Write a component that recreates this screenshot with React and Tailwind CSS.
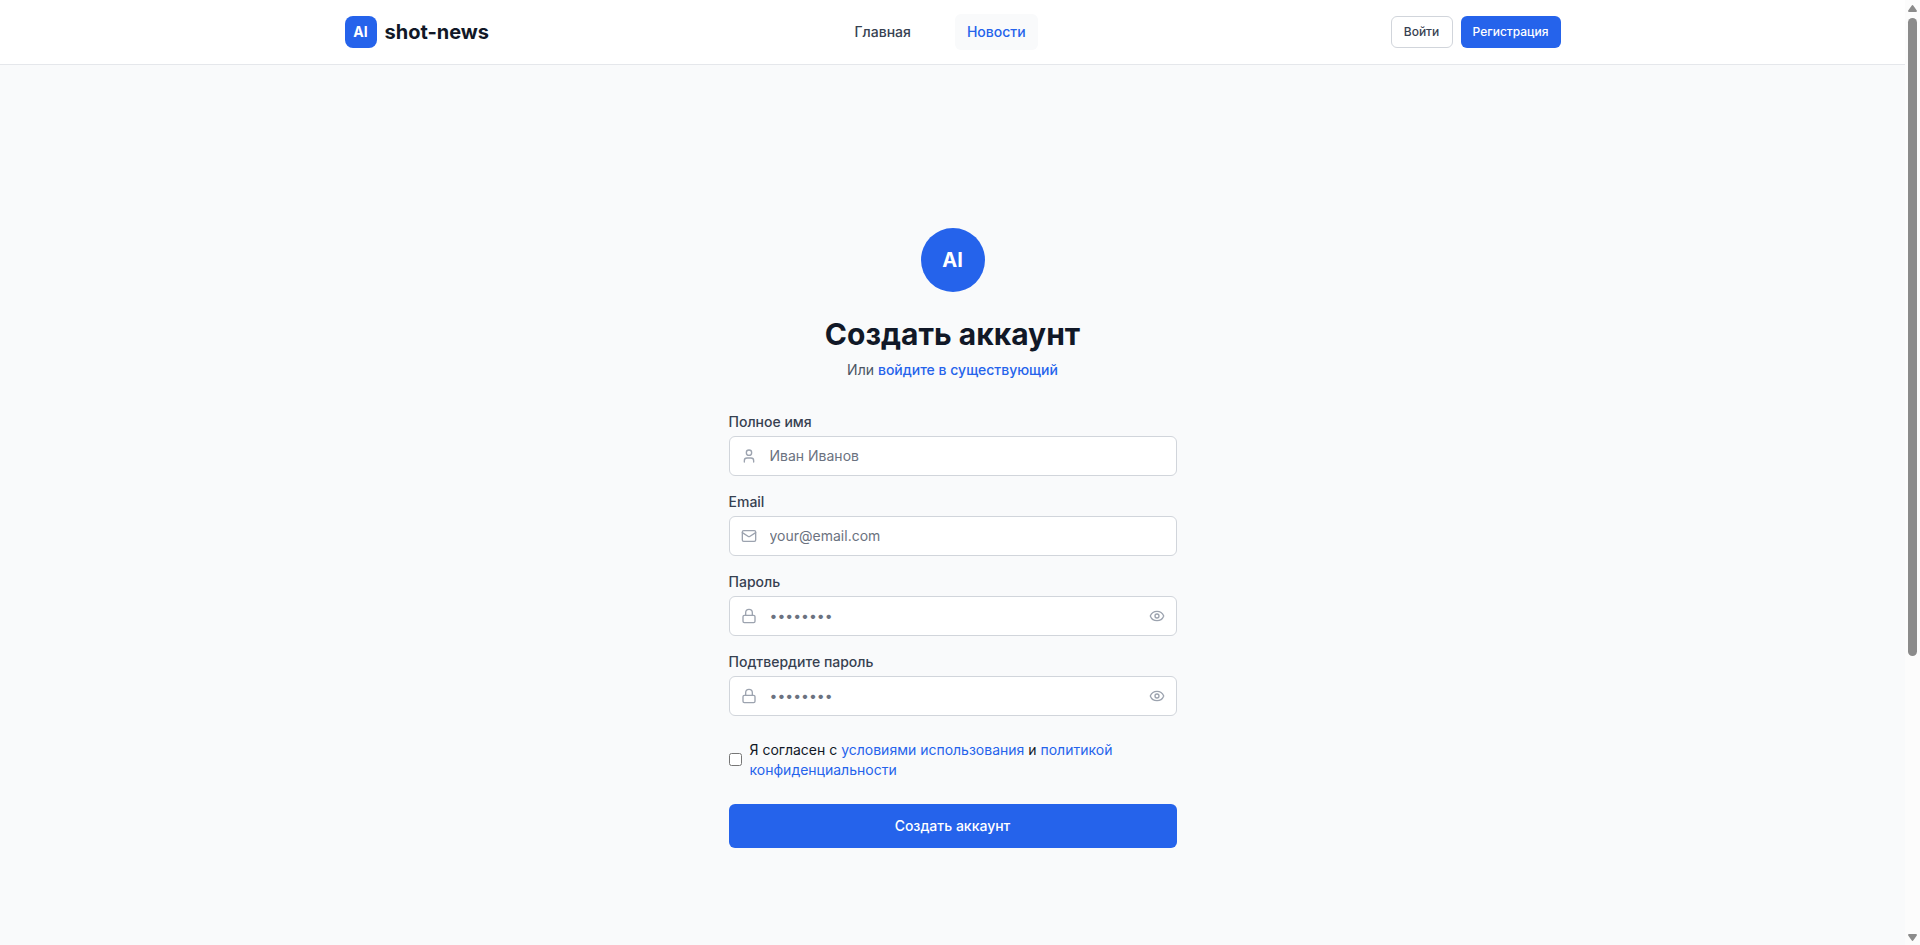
import { User, Mail, Lock, Eye } from "lucide-react";

const fields = [
  { id: "name", label: "Полное имя", placeholder: "Иван Иванов", type: "text", Icon: User },
  { id: "email", label: "Email", placeholder: "your@email.com", type: "email", Icon: Mail },
  { id: "password", label: "Пароль", placeholder: "••••••••", type: "password", Icon: Lock },
  { id: "confirm", label: "Подтвердите пароль", placeholder: "••••••••", type: "password", Icon: Lock },
];

function Header() {
  return (
    <header className="border-b border-[#e5e7eb] bg-white">
      <div className="mx-auto flex h-16 max-w-7xl items-center justify-between pr-[31.5px] pl-8">
        <a className="flex items-center gap-2">
          <span className="flex h-8 w-8 items-center justify-center rounded-lg bg-[#2563eb] text-sm font-bold text-white">AI</span>
          <span className="text-xl font-bold text-[#111827]">shot-news</span>
        </a>
        <nav className="flex items-center gap-8 text-sm font-medium">
          <a className="rounded-md px-3 py-2 text-[#374151]">Главная</a>
          <a className="rounded-md bg-[#f9fafb] px-3 py-2 text-[#2563eb]">Новости</a>
        </nav>
        <div className="flex items-center gap-2 text-xs font-medium">
          <button className="h-8 w-[62px] rounded-md border border-[#d1d5db] bg-white pr-px text-[#374151]">Войти</button>
          <button className="h-8 w-[100px] rounded-md bg-[#2563eb] pr-px text-white">Регистрация</button>
        </div>
      </div>
    </header>
  );
}

function Field({ id, label, placeholder, type, Icon }) {
  return (
    <div>
      <label htmlFor={id} className="block text-sm font-medium text-[#374151]">{label}</label>
      <div className="relative mt-1">
        <Icon className="absolute top-3 left-3 h-4 w-4 text-[#9ca3af]" />
        <input
          id={id}
          type={type}
          placeholder={placeholder}
          className="block h-10 w-full rounded-md border border-[#d1d5db] bg-white px-10 pb-0.5 text-sm placeholder:text-[#6b7280]"
        />
        {type === "password" && <Eye className="absolute top-3 right-3 h-4 w-4 text-[#9ca3af]" />}
      </div>
    </div>
  );
}

function Scrollbar() {
  return (
    <div className="flex w-[15px] shrink-0 flex-col items-center bg-[#fcfcfc]">
      <svg className="mt-[5px] h-[7px] w-[9px]" viewBox="0 0 9 7" fill="#8b8b8b">
        <path d="M4.5 0Q5 0 5.4.7L8.8 5.6Q9.2 7 8 7H1Q-.2 7 .2 5.6L3.6.7Q4 0 4.5 0Z" />
      </svg>
      <div className="mt-1.5 h-[638px] w-[9px] shrink-0 rounded-full bg-[#8b8b8b]" />
      <svg className="mt-auto mb-1 h-[7px] w-[9px]" viewBox="0 0 9 7" fill="#8b8b8b">
        <path d="M4.5 7Q5 7 5.4 6.3L8.8 1.4Q9.2 0 8 0H1Q-.2 0 .2 1.4L3.6 6.3Q4 7 4.5 7Z" />
      </svg>
    </div>
  );
}

export default function App() {
  return (
    <div className="flex h-[945px] w-full overflow-hidden bg-[#f9fafb] font-['Inter',sans-serif] text-[#111827]">
      <div className="min-w-0 flex-1">
        <Header />
        <main className="mx-auto w-full max-w-md pt-[163px]">
          <div className="flex flex-col items-center">
            <div className="flex h-16 w-16 items-center justify-center rounded-full bg-[#2563eb] text-xl font-bold text-white">AI</div>
            <h1 className="mt-6 text-3xl font-bold">Создать аккаунт</h1>
            <p className="mt-2 text-sm text-[#4b5563]">
              Или <a className="font-medium text-[#2563eb]">войдите в существующий</a>
            </p>
          </div>
          <form className="mt-8">
            <div className="flex flex-col gap-4">
              {fields.map((field) => (
                <Field key={field.id} {...field} />
              ))}
            </div>
            <div className="mt-6 flex items-center gap-2">
              <input id="terms" type="checkbox" className="mb-px h-[13px] w-[13px] shrink-0" />
              <label htmlFor="terms" className="text-sm">
                Я согласен с <a className="text-[#2563eb]">условиями использования</a> и{" "}
                <a className="text-[#2563eb]">политикой конфиденциальности</a>
              </label>
            </div>
            <button type="button" className="mt-6 h-11 w-full rounded-md bg-[#2563eb] text-sm font-medium text-white">
              Создать аккаунт
            </button>
          </form>
        </main>
      </div>
      <Scrollbar />
    </div>
  );
}
